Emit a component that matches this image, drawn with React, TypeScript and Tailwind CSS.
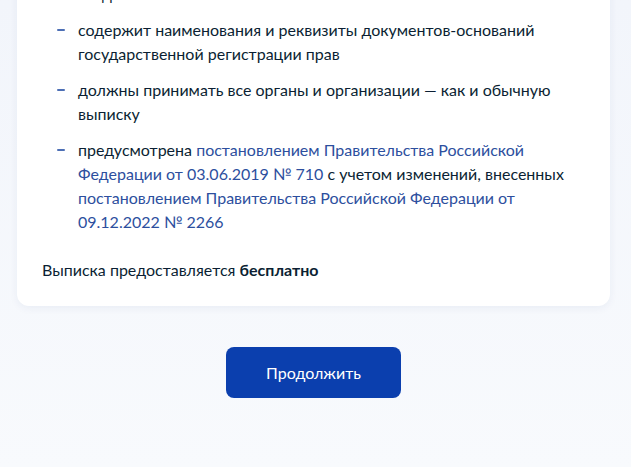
import React from "react";

const font = { fontFamily: "Lato, 'Noto Sans', sans-serif" };

const Item = ({ children }: { children: React.ReactNode }) => (
  <li className="flex">
    <span className="flex h-[24px] w-[36px] shrink-0 items-center pl-[15px]">
      <span className="block h-[2px] w-[8px] rounded-full bg-[#4d6fb5]" />
    </span>
    <span>{children}</span>
  </li>
);

const Link = ({ children }: { children: React.ReactNode }) => (
  <a className="text-[#2d4f9e] no-underline">{children}</a>
);

export default function App() {
  return (
    <div
      className="h-[467px] w-full overflow-hidden bg-gradient-to-b from-[#f2f5fb] to-[#f8fafd] text-[#0b1f33]"
      style={font}
    >
      <div className="-mt-[18px] ml-[17px] w-[593px]">
        <div className="rounded-b-[12px] bg-white px-[25px] pb-[24px] shadow-[0_2px_8px_rgba(16,50,120,0.06)]">
          <ul className="flex flex-col gap-[12px] text-[16px] leading-[24px]">
            <Item>сведения о собственниках объекта</Item>
            <Item>
              содержит наименования и реквизиты документов-оснований
              <br />
              государственной регистрации прав
            </Item>
            <Item>
              должны принимать все органы и организации — как и обычную
              <br />
              выписку
            </Item>
            <Item>
              предусмотрена{" "}
              <Link>
                постановлением Правительства Российской
                <br />
                Федерации от 03.06.2019 № 710
              </Link>{" "}
              с учетом изменений, внесенных
              <br />
              <Link>
                постановлением Правительства Российской Федерации от
                <br />
                09.12.2022 № 2266
              </Link>
            </Item>
          </ul>
          <p className="mt-[24px] text-[16px] leading-[24px]">
            Выписка предоставляется <b className="font-bold">бесплатно</b>
          </p>
        </div>
        <div className="mt-[41px] flex justify-center">
          <button className="h-[51px] w-[175px] rounded-[8px] bg-[#0b3fae] text-[16px] text-white">
            Продолжить
          </button>
        </div>
      </div>
    </div>
  );
}
